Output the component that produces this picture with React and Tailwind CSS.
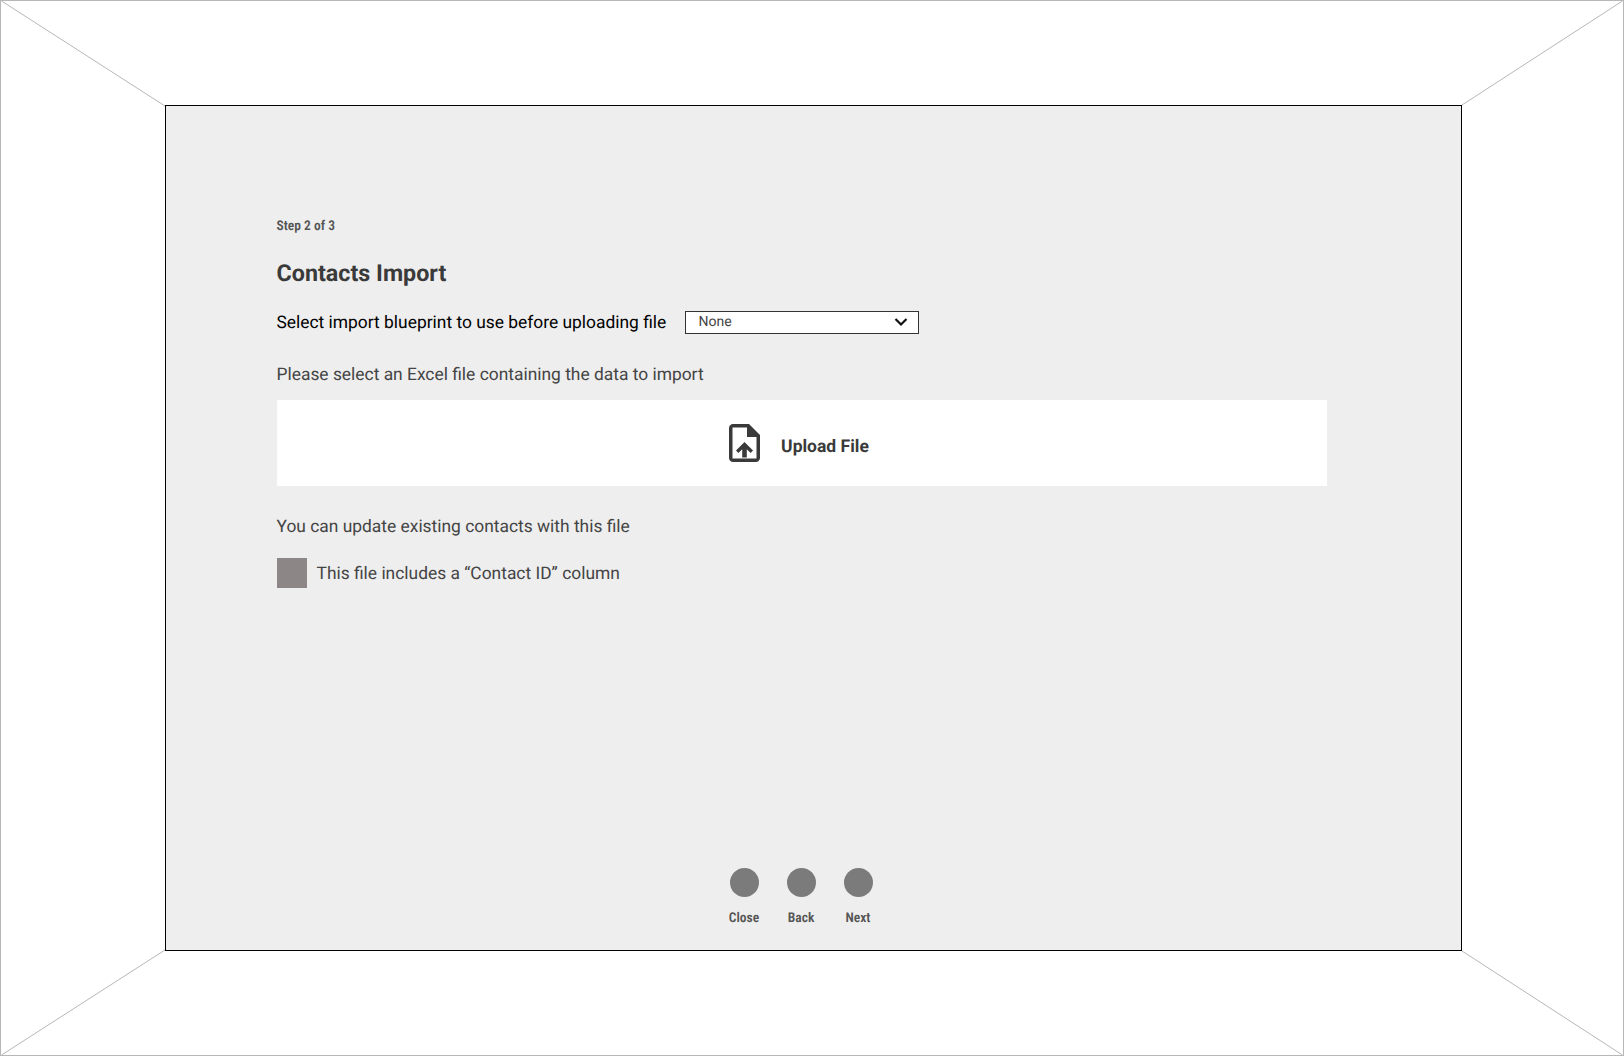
export default function App() {
  const cond = "inline-block origin-center [font-stretch:75%]";
  return (
    <div className="relative flex h-[1056px] w-[1624px] items-center justify-center border border-[#b7b7b7] bg-white font-['Roboto',sans-serif] [text-rendering:geometricPrecision]">
      <svg className="absolute inset-0 h-full w-full" viewBox="0 0 1624 1056" fill="none" stroke="#b7b7b7" strokeWidth="1">
        <path d="M0 0L165 106" />
        <path d="M1624 0L1462 105" />
        <path d="M0 1056L165 950" />
        <path d="M1624 1056L1462 951" />
      </svg>
      <div className="relative ml-[2px] flex h-[846px] w-[1297px] flex-col border border-black bg-[#eeeeee] pl-[111px] pt-[112px]">
        <div className="h-[16px] text-[13.5px] font-semibold leading-[16px] text-[#555]">
          <span className={cond}>Step 2 of 3</span>
        </div>
        <h1 className="mt-[25px] text-[23.3px] font-bold leading-[28px] text-[#3a3a3a]">Contacts Import</h1>
        <div className="mt-[23px] flex h-[24px] items-center">
          <span className="mt-[1px] w-[408px] text-[17.4px] leading-[24px] text-black">Select import blueprint to use before uploading file</span>
          <div className="flex h-[23px] w-[234px] items-center justify-between border border-[#333] bg-white pl-[13px] pr-[10px] text-[14px] text-[#444]">
            <span className="mt-[1px]">None</span>
            <svg width="14" height="10" viewBox="0 0 14 10" fill="none" stroke="#111" strokeWidth="2.2">
              <path d="M1.5 2L7 7.5L12.5 2" />
            </svg>
          </div>
        </div>
        <p className="mt-[29px] text-[17.4px] leading-[24px] text-[#444]">Please select an Excel file containing the data to import</p>
        <div className="mt-[13px] flex h-[86px] w-[1050px] items-center justify-center gap-[21px] bg-white pr-[5px]">
          <svg width="31" height="38" viewBox="0 0 31 38" fill="#3a3a3a">
            <path fillRule="evenodd" d="M4 0H20L31 11V34C31 36.2 29.2 38 27 38H4C1.8 38 0 36.2 0 34V4C0 1.8 1.8 0 4 0ZM3.5 3.5V34.5H27.5V13H18V3.5Z" />
            <path d="M18 1L30 13H18Z" />
            <path d="M15.5 18L24 26.6L21.6 29L17.8 25.2V33.5H13.2V25.2L9.4 29L7 26.6Z" />
          </svg>
          <span className="mt-[8px] text-[17.5px] font-bold leading-[24px] text-[#3a3a3a]">Upload File</span>
        </div>
        <p className="mt-[29px] text-[17.4px] leading-[24px] text-[#444]">You can update existing contacts with this file</p>
        <div className="mt-[19px] flex items-center gap-[10px]">
          <div className="h-[30px] w-[30px] bg-[#8c8686]" />
          <span className="mt-[1px] text-[17.4px] leading-[24px] text-[#444]">This file includes a “Contact ID” column</span>
        </div>
        <div className="ml-[453px] mt-[280px] flex gap-[28px]">
          {["Close", "Back", "Next"].map((l) => (
            <div key={l} className="flex w-[29px] flex-col items-center">
              <div className="h-[29px] w-[29px] rounded-full bg-[#7b7b7b]" />
              <span className={`mt-[13px] whitespace-nowrap text-[13.5px] font-semibold leading-[16px] text-[#555] ${cond}`}>{l}</span>
            </div>
          ))}
        </div>
      </div>
    </div>
  );
}
